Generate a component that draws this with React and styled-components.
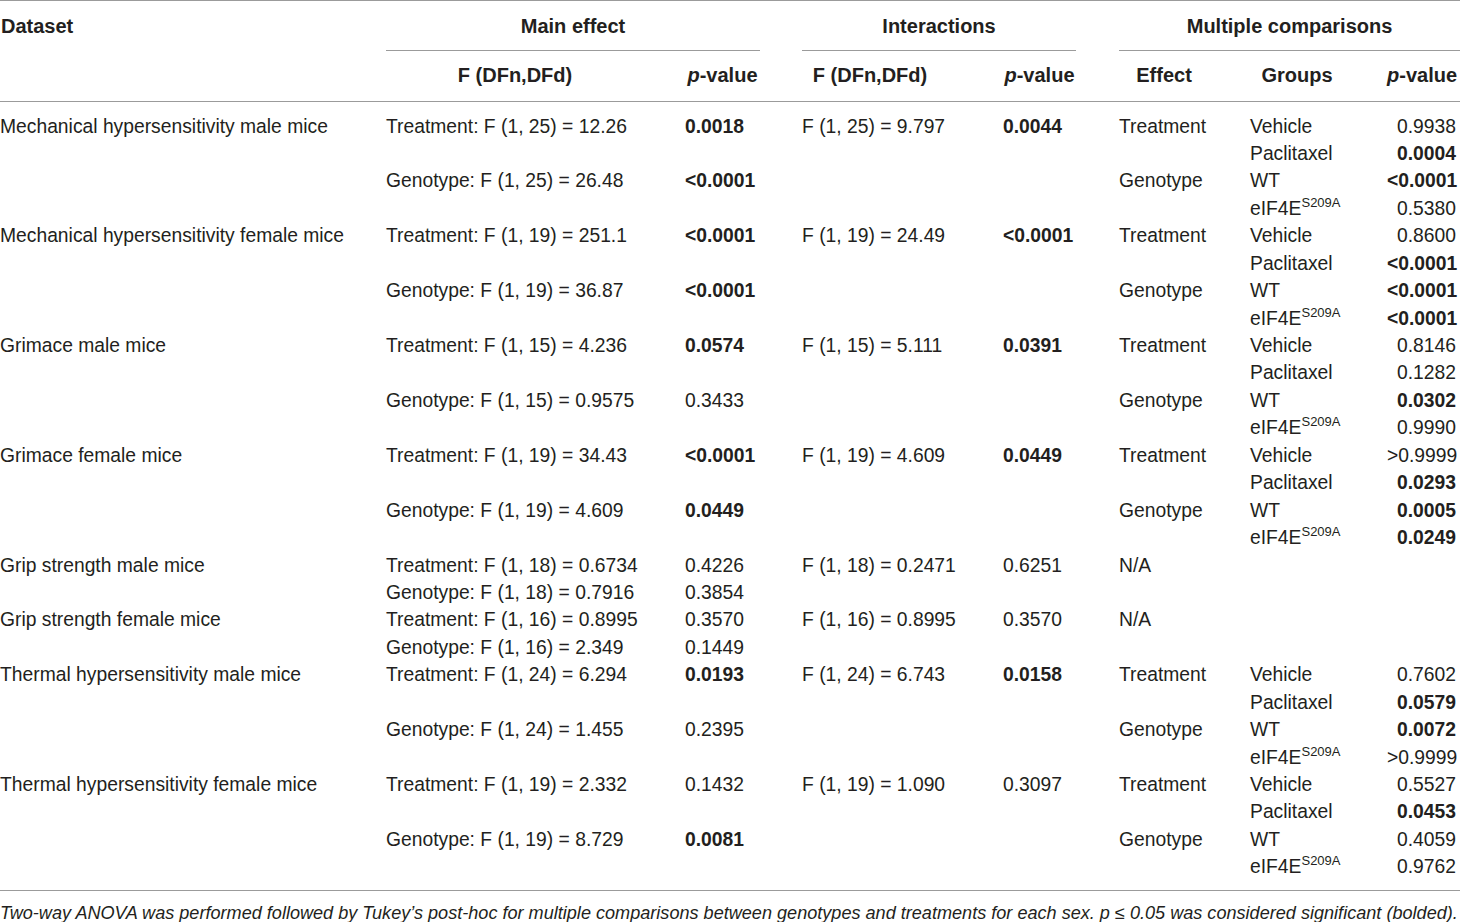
import React from 'react'
import styled, { createGlobalStyle } from 'styled-components'

const GlobalStyle = createGlobalStyle`
  html, body {
    margin: 0;
    padding: 0;
    background: #ffffff;
  }
  body {
    font-family: "Liberation Sans", Arial, sans-serif;
    color: #231f20;
  }
`

const B = (v) => ({ v, b: true })

const datasets = [
    {
        name: 'Mechanical hypersensitivity male mice',
        treat: ['Treatment: F (1, 25) = 12.26', B('0.0018')],
        inter: ['F (1, 25) = 9.797', B('0.0044')],
        geno: ['Genotype: F (1, 25) = 26.48', B('<0.0001')],
        mc: [['Vehicle', '0.9938'], ['Paclitaxel', B('0.0004')], ['WT', B('<0.0001')], ['eIF4E', '0.5380']],
    },
    {
        name: 'Mechanical hypersensitivity female mice',
        treat: ['Treatment: F (1, 19) = 251.1', B('<0.0001')],
        inter: ['F (1, 19) = 24.49', B('<0.0001')],
        geno: ['Genotype: F (1, 19) = 36.87', B('<0.0001')],
        mc: [['Vehicle', '0.8600'], ['Paclitaxel', B('<0.0001')], ['WT', B('<0.0001')], ['eIF4E', B('<0.0001')]],
    },
    {
        name: 'Grimace male mice',
        treat: ['Treatment: F (1, 15) = 4.236', B('0.0574')],
        inter: ['F (1, 15) = 5.111', B('0.0391')],
        geno: ['Genotype: F (1, 15) = 0.9575', '0.3433'],
        mc: [['Vehicle', '0.8146'], ['Paclitaxel', '0.1282'], ['WT', B('0.0302')], ['eIF4E', '0.9990']],
    },
    {
        name: 'Grimace female mice',
        treat: ['Treatment: F (1, 19) = 34.43', B('<0.0001')],
        inter: ['F (1, 19) = 4.609', B('0.0449')],
        geno: ['Genotype: F (1, 19) = 4.609', B('0.0449')],
        mc: [['Vehicle', '>0.9999'], ['Paclitaxel', B('0.0293')], ['WT', B('0.0005')], ['eIF4E', B('0.0249')]],
    },
    {
        name: 'Grip strength male mice',
        treat: ['Treatment: F (1, 18) = 0.6734', '0.4226'],
        inter: ['F (1, 18) = 0.2471', '0.6251'],
        geno: ['Genotype: F (1, 18) = 0.7916', '0.3854'],
        mc: null,
    },
    {
        name: 'Grip strength female mice',
        treat: ['Treatment: F (1, 16) = 0.8995', '0.3570'],
        inter: ['F (1, 16) = 0.8995', '0.3570'],
        geno: ['Genotype: F (1, 16) = 2.349', '0.1449'],
        mc: null,
    },
    {
        name: 'Thermal hypersensitivity male mice',
        treat: ['Treatment: F (1, 24) = 6.294', B('0.0193')],
        inter: ['F (1, 24) = 6.743', B('0.0158')],
        geno: ['Genotype: F (1, 24) = 1.455', '0.2395'],
        mc: [['Vehicle', '0.7602'], ['Paclitaxel', B('0.0579')], ['WT', B('0.0072')], ['eIF4E', '>0.9999']],
    },
    {
        name: 'Thermal hypersensitivity female mice',
        treat: ['Treatment: F (1, 19) = 2.332', '0.1432'],
        inter: ['F (1, 19) = 1.090', '0.3097'],
        geno: ['Genotype: F (1, 19) = 8.729', B('0.0081')],
        mc: [['Vehicle', '0.5527'], ['Paclitaxel', B('0.0453')], ['WT', '0.4059'], ['eIF4E', '0.9762']],
    },
]

// turn each dataset into its printed lines (8 cells each)
const buildLines = () => {
    const lines = []
    datasets.forEach((d) => {
        if (!d.mc) {
            lines.push([d.name, d.treat[0], d.treat[1], d.inter[0], d.inter[1], 'N/A', '', ''])
            lines.push(['', d.geno[0], d.geno[1], '', '', '', '', ''])
            return
        }
        lines.push([d.name, d.treat[0], d.treat[1], d.inter[0], d.inter[1], 'Treatment', d.mc[0][0], d.mc[0][1]])
        lines.push(['', '', '', '', '', '', d.mc[1][0], d.mc[1][1]])
        lines.push(['', d.geno[0], d.geno[1], '', '', 'Genotype', d.mc[2][0], d.mc[2][1]])
        lines.push(['', '', '', '', '', '', d.mc[3][0], d.mc[3][1]])
    })
    return lines
}

const widths = [386, 299, 117, 201, 116, 131, 137, 73]

const PValue = () => <><i>p</i>-value</>

const renderCell = (c) => {
    if (c === 'eIF4E') return <>eIF4E<Sup>S209A</Sup></>
    if (c && typeof c === 'object') return <strong>{c.v}</strong>
    return c
}

const App = () => {
    const lines = buildLines()
    return (
        <Page>
            <GlobalStyle />
            <Table>
                <colgroup>
                    {widths.map((w, i) => <col key={i} style={{ width: w }} />)}
                </colgroup>
                <thead>
                    <HeadRow>
                        <GroupTh>Dataset</GroupTh>
                        <GroupTh colSpan={2} $center $pr={42}><GroupLabel>Main effect</GroupLabel></GroupTh>
                        <GroupTh colSpan={2} $center $pr={43}><GroupLabel>Interactions</GroupLabel></GroupTh>
                        <GroupTh colSpan={3} $center><GroupLabel>Multiple comparisons</GroupLabel></GroupTh>
                    </HeadRow>
                    <SubHeadRow>
                        <SubTh />
                        <SubTh $pr={41}>F (DFn,DFd)</SubTh>
                        <SubTh $pr={42}><PValue /></SubTh>
                        <SubTh $pr={65}>F (DFn,DFd)</SubTh>
                        <SubTh $pr={43}><PValue /></SubTh>
                        <SubTh $pr={41}>Effect</SubTh>
                        <SubTh $pr={43}>Groups</SubTh>
                        <SubTh $pr={3}><PValue /></SubTh>
                    </SubHeadRow>
                </thead>
                <tbody>
                    {lines.map((line, i) => (
                        <Row key={i}>
                            {line.map((c, j) => (
                                <Cell key={j} $right={j === 7}>{renderCell(c)}</Cell>
                            ))}
                        </Row>
                    ))}
                </tbody>
            </Table>
            <Note>
                Two-way ANOVA was performed followed by Tukey’s post-hoc for multiple comparisons between genotypes and treatments for each sex. p ≤ 0.05 was considered significant (bolded).
            </Note>
        </Page>
    )
}

export default App

const Page = styled.div`
    width: 1460px;
    height: 922px;
    overflow: hidden;
    background: #fff;
`

const Table = styled.table`
    width: 1460px;
    table-layout: fixed;
    border-collapse: collapse;
    border-top: 1.5px solid #9b9b9b;
    border-bottom: 1.5px solid #9b9b9b;
    font-size: 19.3px;
`

const HeadRow = styled.tr`
    height: 50px;
`

const GroupTh = styled.th`
    padding: 0 ${(p) => p.$pr || 0}px 0 0;
    text-align: ${(p) => (p.$center ? 'center' : 'left')};
    vertical-align: bottom;
    font-size: 20px;
    font-weight: 700;
    line-height: 24px;
    color: #231f20;
    &:first-child {
        vertical-align: top;
        padding-top: 13px;
        padding-left: 1px;
    }
`

const GroupLabel = styled.div`
    padding: 13px 0 12px;
    border-bottom: 1px solid #9b9b9b;
`

const SubHeadRow = styled.tr`
    height: 50px;
    border-bottom: 1.5px solid #9b9b9b;
`

const SubTh = styled.th`
    padding: 0 ${(p) => p.$pr || 0}px 0 0;
    text-align: center;
    vertical-align: middle;
    font-size: 20px;
    font-weight: 700;
    color: #231f20;
    white-space: nowrap;
`

const Row = styled.tr`
    &:first-child td {
        padding-top: 11px;
    }
    &:last-child td {
        padding-bottom: 9px;
    }
`

const Cell = styled.td`
    padding: 0 ${(p) => (p.$right ? 4 : 0)}px 0 0;
    height: 27.44px;
    line-height: 27.44px;
    text-align: ${(p) => (p.$right ? 'right' : 'left')};
    white-space: nowrap;
    color: #231f20;
    strong {
        font-weight: 700;
    }
`

const Sup = styled.sup`
    font-size: 13px;
    line-height: 0;
    vertical-align: 8px;
`

const Note = styled.p`
    margin: 10px 0 0;
    font-size: 18.1px;
    font-style: italic;
    line-height: 24px;
    white-space: nowrap;
    color: #231f20;
`
